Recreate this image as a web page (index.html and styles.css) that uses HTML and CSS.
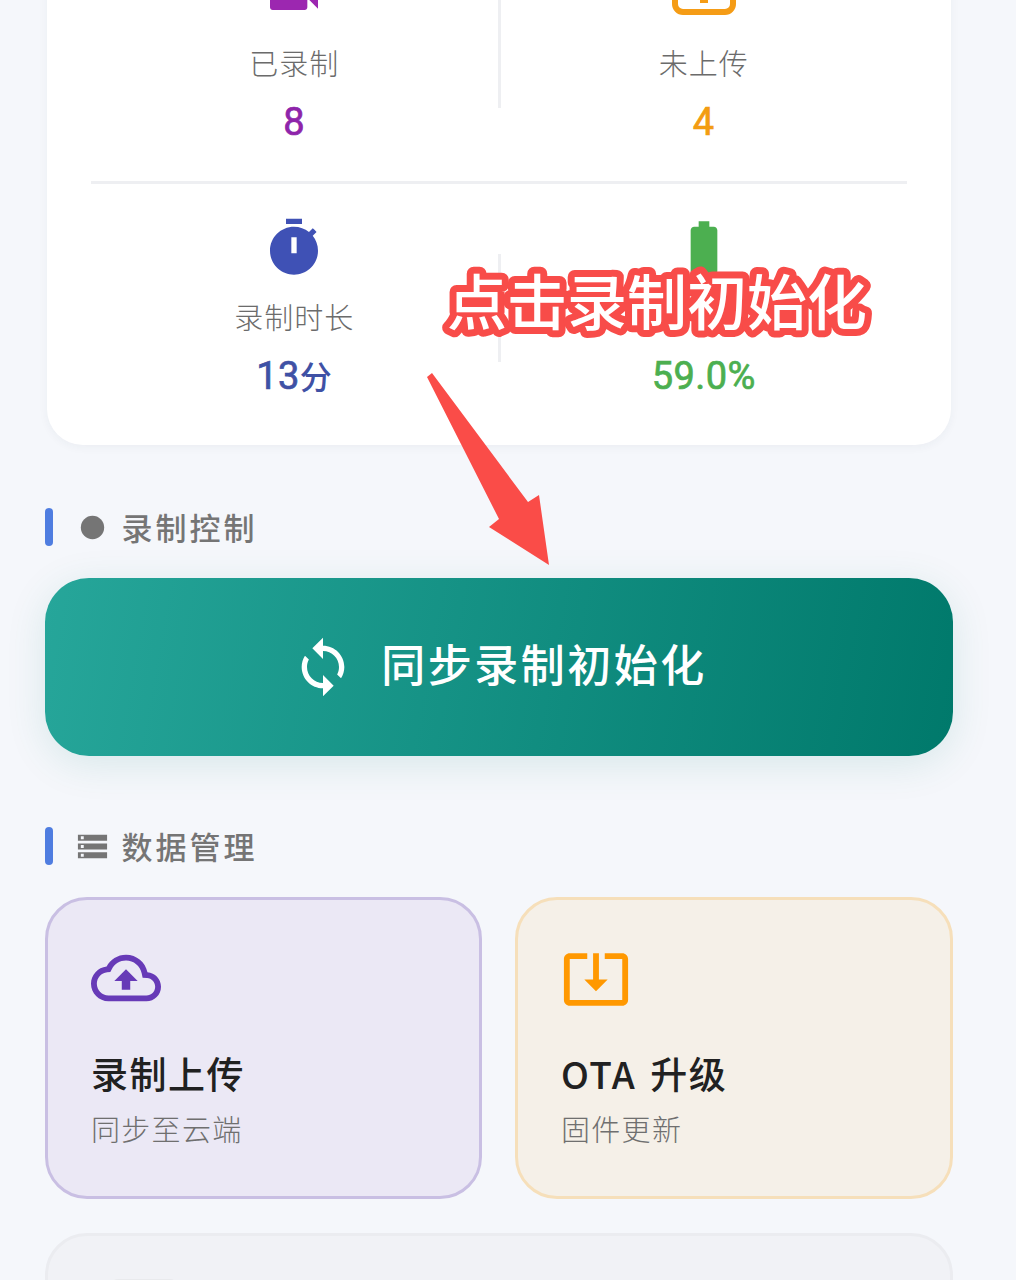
FILE: index.html
```html
<!DOCTYPE html>
<html lang="zh-CN">
<head>
<meta charset="utf-8">
<title>录制控制</title>
<link rel="stylesheet" href="styles.css">
</head>
<body>
<main class="page">
  <section class="stats-card">
    <div class="stats-row">
      <div class="stat">
        <svg class="stat-icon icon-purple" viewBox="0 0 24 24"><path d="M17 10.500V7c0-.55-.45-1-1-1H4c-.55 0-1 .45-1 1v10c0 .55.45 1 1 1h12c.55 0 1-.45 1-1v-3.500l4 4v-11l-4 4z"/></svg>
        <div class="stat-label">已录制</div>
        <div class="stat-value value-purple">8</div>
      </div>
      <div class="stat-divider"></div>
      <div class="stat">
        <svg class="stat-icon icon-orange" viewBox="0 0 64 64"><path d="M0 30V42a11 11 0 0 0 11 11h42a11 11 0 0 0 11-11V30h-6v12a5 5 0 0 1-5 5H11a5 5 0 0 1-5-5V30z"/><rect x="28" y="30" width="8" height="11"/></svg>
        <div class="stat-label">未上传</div>
        <div class="stat-value value-orange">4</div>
      </div>
    </div>
    <div class="stats-rule"></div>
    <div class="stats-row">
      <div class="stat">
        <svg class="stat-icon icon-indigo" viewBox="0 0 24 24"><path fill-rule="evenodd" d="M15 1H9v2h6V1zm-4 13h2V8h-2v6zm8.030-6.610l1.420-1.420c-.43-.51-.9-.99-1.410-1.410l-1.420 1.420C16.070 4.740 14.120 4 12 4c-4.970 0-9 4.030-9 9s4.020 9 9 9 9-4.030 9-9c0-2.120-.74-4.070-1.970-5.610z"/></svg>
        <div class="stat-label">录制时长</div>
        <div class="stat-value value-indigo">13<span class="stat-unit">分</span></div>
      </div>
      <div class="stat-divider"></div>
      <div class="stat">
        <svg class="stat-icon icon-green" viewBox="0 0 24 24"><path d="M15.670 4H14V2h-4v2H8.330C7.600 4 7 4.600 7 5.330v15.330C7 21.400 7.600 22 8.330 22h7.330c.74 0 1.340-.6 1.340-1.330V5.330C17 4.600 16.400 4 15.670 4z"/></svg>
        <div class="stat-label"></div>
        <div class="stat-value value-green">59.0%</div>
      </div>
    </div>
  </section>

  <h2 class="section-head head-record">
    <span class="section-bar"></span>
    <svg class="section-icon" viewBox="0 0 24 24"><circle cx="12" cy="12" r="8"/></svg>
    <span class="section-text">录制控制</span>
  </h2>

  <button class="sync-button" type="button">
    <svg class="sync-icon" viewBox="0 0 24 24"><path d="M12 4V1L8 5l4 4V6c3.310 0 6 2.690 6 6 0 1.010-.25 1.970-.7 2.800l1.460 1.460C19.540 15.030 20 13.570 20 12c0-4.420-3.580-8-8-8zm0 14c-3.310 0-6-2.690-6-6 0-1.010.25-1.970.7-2.800L5.240 7.740C4.460 8.970 4 10.430 4 12c0 4.420 3.580 8 8 8v3l4-4-4-4v3z"/></svg>
    <span class="sync-text">同步录制初始化</span>
  </button>

  <h2 class="section-head head-data">
    <span class="section-bar"></span>
    <svg class="section-icon" viewBox="0 0 24 24"><path d="M2 20h20v-4H2v4zm2-3h2v2H4v-2zM2 4v4h20V4H2zm4 3H4V5h2v2zm-4 7h20v-4H2v4zm2-3h2v2H4v-2z"/></svg>
    <span class="section-text">数据管理</span>
  </h2>

  <div class="action-grid">
    <article class="action-card card-purple">
      <svg class="action-icon icon-deep" viewBox="0 0 24 24"><path d="M19.350 10.040C18.670 6.590 15.640 4 12 4 9.110 4 6.600 5.640 5.350 8.040 2.340 8.360 0 10.910 0 14c0 3.310 2.690 6 6 6h13c2.760 0 5-2.240 5-5 0-2.640-2.050-4.780-4.650-4.960zM19 18H6c-2.210 0-4-1.790-4-4 0-2.050 1.530-3.760 3.560-3.970l1.070-.11.5-.95C8.080 7.140 9.940 6 12 6c2.620 0 4.880 1.860 5.390 4.430l.3 1.500 1.530.11c1.560.1 2.780 1.410 2.780 2.960 0 1.650-1.350 3-3 3zM8 13h2.550v3h2.900v-3H16l-4-4z"/></svg>
      <h3 class="action-title">录制上传</h3>
      <p class="action-sub">同步至云端</p>
    </article>
    <article class="action-card card-amber">
      <svg class="action-icon icon-amber" viewBox="0 0 24 24"><path d="M12 16.500l4-4h-3v-9h-2v9H8l4 4zm9-13h-6v1.990h6v14.030H3V5.490h6V3.500H3c-1.100 0-2 .9-2 2v14c0 1.100.9 2 2 2h18c1.100 0 2-.9 2-2v-14c0-1.100-.9-2-2-2z"/></svg>
      <h3 class="action-title">OTA 升级</h3>
      <p class="action-sub">固件更新</p>
    </article>
    <article class="action-card card-grey">
      <div class="grey-icon"></div>
    </article>
  </div>
</main>

<svg class="overlay" viewBox="0 0 1016 1280">
  <polygon class="overlay-arrow" points="427,377 432,373 528,502 539,495 549,565 489,527 499,519"/>
  <text class="overlay-text" x="447" y="325">点击录制初始化</text>
</svg>
</body>
</html>
```
FILE: styles.css
```css
* { box-sizing: border-box; }

html, body {
  height: 1280px;
  margin: 0;
  overflow: hidden;
}

body {
  position: relative;
  background: #f5f7fb;
  font-family: "Noto Sans CJK SC", "Noto Sans", sans-serif;
}

.page {
  height: 1350px;
  margin-top: -70px;
  padding: 0 63px 0 45px;
  overflow: hidden;
}

.stats-card {
  margin: 0 2px;
  padding: 32px 44px 48px;
  background: #fff;
  border-radius: 36px;
  box-shadow: 0 2px 10px rgba(40, 50, 80, 0.05);
}

.stats-row {
  display: grid;
  grid-template-columns: 1fr 3px 1fr;
}

.stat {
  display: flex;
  flex-direction: column;
  align-items: center;
}

.stat-icon {
  display: block;
  width: 64px;
  height: 64px;
  overflow: visible;
}

.stat-label {
  min-height: 40px;
  margin-top: 16px;
  font-size: 29px;
  line-height: 40px;
  letter-spacing: 1px;
  font-weight: 300;
  color: #6b6b6b;
}

.stat-value {
  height: 42px;
  margin-top: 19px;
  font-family: "Roboto", "Noto Sans CJK SC", sans-serif;
  font-size: 38px;
  line-height: 42px;
  font-weight: 400;
  letter-spacing: 0.4px;
  -webkit-text-stroke: 0.7px currentColor;
}

.stat-unit {
  font-family: "Noto Sans CJK SC", sans-serif;
  font-size: 32px;
  font-weight: 500;
  line-height: 1;
  -webkit-text-stroke: 0;
}

.stat-divider {
  margin-top: 38px;
  height: 108px;
  background: #eeeff2;
}

.stats-rule {
  height: 3px;
  margin: 38px 0 32px;
  background: #eeeff2;
}

.icon-purple { fill: #9c27b0; }
.icon-orange { fill: #f59c16; }
.icon-indigo { fill: #3f51b5; }
.icon-green { fill: #4caf50; }
.value-purple { color: #8e24aa; }
.value-orange { color: #f39c12; }
.value-indigo { color: #3f51a5; }
.value-green { color: #4caf50; }

.section-head {
  display: flex;
  align-items: center;
  height: 38px;
  margin: 0 0 32px;
  font-weight: 500;
}

.head-record { margin-top: 63px; }
.head-data { margin-top: 71px; }

.section-bar {
  width: 8px;
  height: 38px;
  border-radius: 4px;
  background: #4f7de0;
}

.section-icon {
  width: 35px;
  height: 35px;
  margin: 0 12px 0 21.5px;
  fill: #757575;
}

.section-text {
  padding-bottom: 2px;
  font-size: 31px;
  letter-spacing: 3px;
  color: #757575;
}

.sync-button {
  display: flex;
  align-items: center;
  justify-content: center;
  gap: 26px;
  width: 100%;
  height: 178px;
  padding: 0;
  border: 0;
  border-radius: 44px;
  background: linear-gradient(100deg, #26a69a 0%, #00796b 100%);
  box-shadow: 0 8px 40px rgba(0, 121, 107, 0.12);
  color: #fff;
  font-family: inherit;
  font-size: 44px;
  font-weight: 500;
  letter-spacing: 2.5px;
}

.sync-text { padding-bottom: 8px; }

.sync-icon {
  width: 64px;
  height: 64px;
  fill: #fff;
}

.action-grid {
  display: grid;
  grid-template-columns: 437px 438px;
  gap: 34px 33px;
}

.action-card {
  padding: 43px 43px 47px;
  border: 3px solid;
  border-radius: 42px;
}

.card-purple { background: #ebe8f5; border-color: #c9bfe3; }
.card-amber { background: #f5f0e8; border-color: #f6dfba; }

.card-grey {
  grid-column: 1 / -1;
  height: 240px;
  background: #f1f2f6;
  border-color: #ebecf0;
}

.action-icon {
  display: block;
  width: 70px;
  height: 70px;
}

.icon-deep { fill: #673ab7; }
.icon-amber { fill: #ff9800; }

.action-title {
  margin: 35px 0 0;
  font-size: 37px;
  line-height: 50px;
  letter-spacing: 1.5px;
  word-spacing: 4px;
  font-weight: 500;
  color: #212121;
}

.action-sub {
  margin: 9px 0 0;
  font-size: 29px;
  line-height: 42px;
  letter-spacing: 1.3px;
  font-weight: 300;
  color: #6f6f6f;
}

.grey-icon {
  width: 68px;
  height: 40px;
  margin-left: 19px;
  border-radius: 8px;
  background: #e9eaed;
}

.overlay {
  position: absolute;
  left: 0;
  top: 0;
  width: 1016px;
  height: 1280px;
}

.overlay-arrow { fill: #fa4c48; }

.overlay-text {
  font-size: 60px;
  font-weight: 500;
  fill: #fff;
  stroke: #f84c49;
  stroke-width: 14px;
  stroke-linejoin: round;
  paint-order: stroke fill;
}
```
